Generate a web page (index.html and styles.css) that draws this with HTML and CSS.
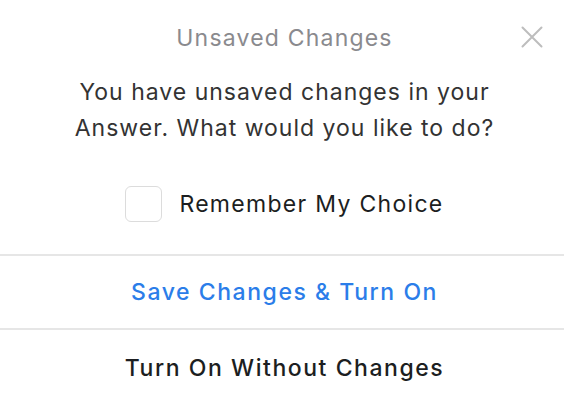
FILE: index.html
```html
<!DOCTYPE html>
<html>
<head>
<meta charset="utf-8">
<link rel="stylesheet" href="styles.css">
</head>
<body>
<div class="dialog">
  <div class="header">
    <div class="title">Unsaved Changes</div>
    <button class="close" aria-label="Close">
      <svg width="22" height="22" viewBox="0 0 22 22"><path d="M1.5 1.5 L20.5 20.5 M20.5 1.5 L1.5 20.5" stroke="#bdbdbd" stroke-width="2" stroke-linecap="round"/></svg>
    </button>
  </div>
  <p class="message">You have unsaved changes in your Answer. What would you like to do?</p>
  <label class="remember">
    <span class="box"></span>
    <span class="label">Remember My Choice</span>
  </label>
  <div class="actions">
    <button class="action primary">Save Changes &amp; Turn On</button>
    <button class="action last">Turn On Without Changes</button>
  </div>
</div>
</body>
</html>
```

FILE: styles.css
```css
* { box-sizing: border-box; }
html, body { margin: 0; padding: 0; background: #fff; overflow: hidden; }
body { font-family: Inter, "Noto Sans", sans-serif; }
.dialog { width: 564px; height: 400px; }
.header { position: relative; height: 74px; padding-top: 22px; padding-left: 5px; text-align: center; }
.title { font-size: 23px; color: #8a8a8e; line-height: 32px; letter-spacing: 1.2px; }
.close { position: absolute; top: 26px; right: 21px; width: 22px; height: 22px; padding: 0; border: 0; background: none; }
.close svg { display: block; }
.message { margin: 0 auto; padding-left: 5px; width: 490px; text-align: center; font-size: 23px; line-height: 36px; color: #333; letter-spacing: 1px; }
.remember { display: flex; align-items: center; justify-content: center; gap: 17px; margin-top: 40px; padding-left: 5px; height: 36px; }
.box { width: 37px; height: 36px; border: 1.5px solid #dcdcdc; border-radius: 6px; }
.label { font-size: 23px; color: #1c1e21; letter-spacing: 1.3px; }
.actions { margin-top: 32px; display: flex; flex-direction: column; }
.action { height: 74px; flex-shrink: 0; border: 0; border-top: 2px solid #e6e6e6; background: #fff; font-family: inherit; font-size: 23px; color: #1c1e21; padding: 0 0 0 5px; letter-spacing: 1.55px; font-weight: 500; }
.action.primary { color: #2b7de9; }
.action.last { height: 78px; }
```
